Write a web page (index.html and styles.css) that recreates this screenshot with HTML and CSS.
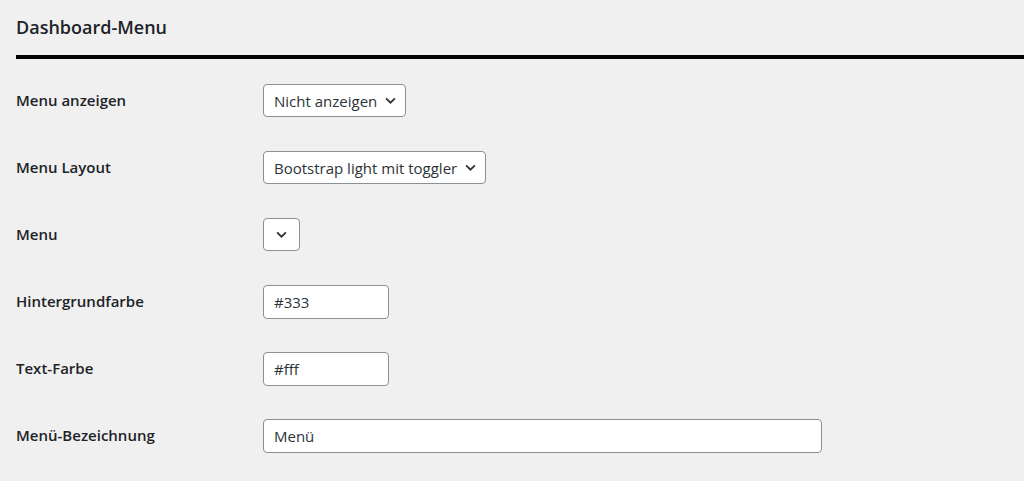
FILE: index.html
```html
<!DOCTYPE html>
<html lang="de">
<head>
    <meta charset="UTF-8">
    <title>Dashboard-Menu</title>
    <link rel="stylesheet" href="styles.css">
</head>
<body>
    <h2 class="titel">Dashboard-Menu</h2>

    <div class="einstellungen">
        <div class="zeile">
            <label class="bezeichnung">Menu anzeigen</label>
            <div class="feld">
                <span class="auswahl">Nicht anzeigen<svg class="pfeil" viewBox="0 0 10 6"><path d="M1 1l4 4 4-4"/></svg></span>
            </div>
        </div>
        <div class="zeile">
            <label class="bezeichnung">Menu Layout</label>
            <div class="feld">
                <span class="auswahl">Bootstrap light mit toggler<svg class="pfeil" viewBox="0 0 10 6"><path d="M1 1l4 4 4-4"/></svg></span>
            </div>
        </div>
        <div class="zeile">
            <label class="bezeichnung">Menu</label>
            <div class="feld">
                <span class="auswahl leer"><svg class="pfeil" viewBox="0 0 10 6"><path d="M1 1l4 4 4-4"/></svg></span>
            </div>
        </div>
        <div class="zeile">
            <label class="bezeichnung">Hintergrundfarbe</label>
            <div class="feld">
                <input class="eingabe kurz" type="text" value="#333">
            </div>
        </div>
        <div class="zeile">
            <label class="bezeichnung">Text-Farbe</label>
            <div class="feld">
                <input class="eingabe kurz" type="text" value="#fff">
            </div>
        </div>
        <div class="zeile">
            <label class="bezeichnung">Menü-Bezeichnung</label>
            <div class="feld">
                <input class="eingabe lang" type="text" value="Menü">
            </div>
        </div>
    </div>
</body>
</html>
```

FILE: styles.css
```css
body {
    margin: 0;
    padding: 0 0 0 16px;
    background-color: #f0f0f1;
    color: #1d2327;
    font-family: "Open Sans", "Noto Sans", sans-serif;
    font-size: 14px;
    overflow: hidden;
}
.titel {
    margin: 0;
    padding: 15px 0 16px;
    font-size: 18px;
    line-height: 24px;
    font-weight: 600;
    border-bottom: 4px solid #000;
}
.einstellungen {
    padding-top: 8px;
}
.zeile {
    display: flex;
    align-items: center;
    height: 67px;
}
.bezeichnung {
    width: 247px;
    padding-bottom: 2px;
    font-weight: 600;
    font-size: 15px;
}
.auswahl {
    display: inline-flex;
    align-items: center;
    height: 33px;
    box-sizing: border-box;
    padding: 0 9px 0 10px;
    background: #fff;
    border: 1px solid #8c8f94;
    border-radius: 4px;
    font-size: 15px;
    color: #2c3338;
}
.auswahl.leer {
    width: 37px;
    justify-content: center;
    padding: 0;
}
.pfeil {
    width: 11px;
    height: 7px;
    margin-left: 8px;
    fill: none;
    stroke: #2c3338;
    stroke-width: 1.6;
}
.leer .pfeil {
    margin-left: 0;
}
.eingabe {
    box-sizing: border-box;
    height: 34px;
    padding: 0 10px;
    background: #fff;
    border: 1px solid #8c8f94;
    border-radius: 4px;
    font-family: inherit;
    font-size: 15px;
    color: #2c3338;
}
.kurz {
    width: 126px;
}
.lang {
    width: 559px;
}
```
